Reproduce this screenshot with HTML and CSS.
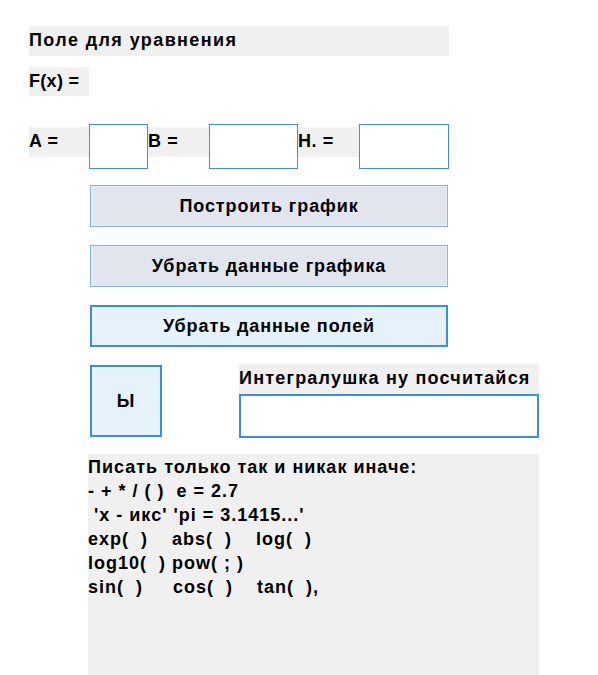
FILE: index.html
```html
<!DOCTYPE html>
<html lang="ru">
<head>
<meta charset="utf-8">
<title>Интеграл</title>
<link rel="stylesheet" href="styles.css">
</head>
<body>
<div class="form">
  <div class="label title">Поле для уравнения</div>
  <div class="label fx">F(x) =</div>
  <div class="range-row">
    <div class="label small w60">A =</div>
    <div class="input w59"></div>
    <div class="label small w61">B =</div>
    <div class="input w89"></div>
    <div class="label small w61">H. =</div>
    <div class="input w90"></div>
  </div>
  <div class="buttons">
    <div class="btn">Построить график</div>
    <div class="btn">Убрать данные графика</div>
    <div class="btn active">Убрать данные полей</div>
  </div>
  <div class="integral-row">
    <div class="btn square active">Ы</div>
    <div class="integral">
      <div class="label integral-label">Интегралушка ну посчитайся</div>
      <div class="input integral-input"></div>
    </div>
  </div>
  <div class="help">Писать только так и никак иначе:
- + * / ( )  e = 2.7
 'x - икс' 'pi = 3.1415...'
exp(  )    abs(  )    log(  )
log10(  ) pow( ; )
sin(  )     cos(  )    tan(  ),</div>
</div>
</body>
</html>
```

FILE: styles.css
```css
html, body {
  margin: 0;
  padding: 0;
  background: #ffffff;
}

body {
  font-family: "Liberation Sans", Arial, sans-serif;
  font-weight: bold;
  font-size: 18px;
  letter-spacing: 1.1px;
  color: #000;
}

.form {
  display: flex;
  flex-direction: column;
  align-items: flex-start;
  padding: 26px 0 0 29px;
}

.label {
  background: #f0f0f0;
  height: 30px;
  box-sizing: border-box;
  padding: 3px 0 0 0;
  line-height: 22px;
  white-space: nowrap;
}

.title {
  width: 420px;
  letter-spacing: 1.4px;
}

.fx {
  margin-top: 11px;
  width: 60px;
  height: 29px;
  letter-spacing: 0.3px;
}

.range-row {
  margin-top: 28px;
  display: flex;
  align-items: flex-start;
  height: 45px;
}

.range-row .small {
  margin-top: 3px;
  letter-spacing: 0.6px;
}

.w60 { width: 60px; }
.w61 { width: 61px; }

.input {
  background: #ffffff;
  border: 1px solid #3a8ee3;
  box-sizing: border-box;
}

.w59 { width: 59px; height: 45px; }
.w89 { width: 89px; height: 45px; }
.w90 { width: 90px; height: 45px; }

.buttons {
  margin-top: 16px;
  margin-left: 61px;
  display: flex;
  flex-direction: column;
  gap: 18px;
}

.btn {
  width: 358px;
  height: 42px;
  box-sizing: border-box;
  background: #e1e6ee;
  border: 1px solid #7eb3e6;
  box-shadow: inset 0 0 0 1px #e9eef4;
  display: flex;
  align-items: center;
  justify-content: center;
  letter-spacing: 0.9px;
}

.btn.active {
  background: #e5f1fb;
  border: 2px solid #3a8ee3;
  box-shadow: none;
}

.integral-row {
  margin-top: 17px;
  margin-left: 61px;
  display: flex;
  gap: 77px;
}

.btn.square {
  width: 72px;
  height: 72px;
  margin-top: 1px;
}

.integral {
  display: flex;
  flex-direction: column;
  width: 300px;
}

.integral-label {
  width: 300px;
  letter-spacing: 1.2px;
}

.integral-input {
  width: 300px;
  height: 44px;
  border-width: 2px;
}

.help {
  margin-top: 16px;
  margin-left: 59px;
  width: 451px;
  height: 221px;
  box-sizing: border-box;
  background: #f0f0f0;
  white-space: pre;
  padding: 1px 0 0 0;
  line-height: 24px;
  letter-spacing: 1px;
}
```
